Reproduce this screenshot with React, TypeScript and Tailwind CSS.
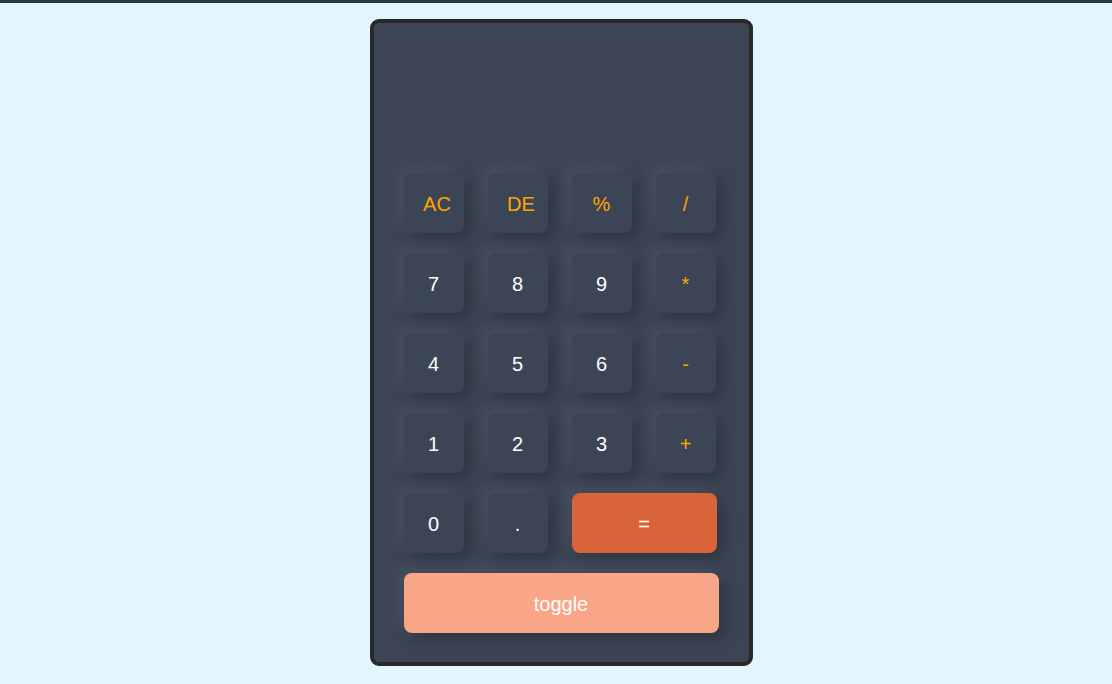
const keys: [string, boolean, boolean][] = [
  ['AC', true, true],
  ['DE', true, true],
  ['%', true, false],
  ['/', true, false],
  ['7', false, false],
  ['8', false, false],
  ['9', false, false],
  ['*', true, false],
  ['4', false, false],
  ['5', false, false],
  ['6', false, false],
  ['-', true, false],
  ['1', false, false],
  ['2', false, false],
  ['3', false, false],
  ['+', true, false],
  ['0', false, false],
  ['.', false, false],
]

const soft =
  'shadow-[-6px_-6px_16px_rgba(255,255,255,0.07),6px_6px_16px_rgba(0,0,0,0.25)]'

export default function App() {
  return (
    <div className="min-h-[684px] border-t-[3px] border-[#26393f] bg-[#e2f6ff] font-['Liberation_Sans',Arial,sans-serif]">
      <div className="flex justify-center pl-[10px] pt-4">
        <div className="w-[383px] rounded-[9px] border-4 border-[#2b2828] bg-[#3c4555] px-[30px] pb-[29px] pt-[150px]">
          <div className="grid grid-cols-[60px_60px_60px_60px] gap-x-6 gap-y-5">
            {keys.map(([label, op, wide]) => (
              <button
                key={label}
                className={`h-[60px] w-[60px] rounded-lg bg-[#3c4555] pt-[2px] text-xl ${soft} ${
                  op ? 'text-[#ffa500]' : 'text-white'
                } ${wide ? 'pl-[7px]' : ''}`}
              >
                {label}
              </button>
            ))}
            <button
              className={`col-span-2 h-[60px] w-[145px] rounded-lg bg-[#d9643a] pt-[2px] text-xl text-white ${soft}`}
            >
              =
            </button>
            <button
              className={`col-span-4 h-[60px] w-[315px] rounded-lg bg-[#f9a587] pt-[2px] text-xl text-white ${soft}`}
            >
              toggle
            </button>
          </div>
        </div>
      </div>
    </div>
  )
}
